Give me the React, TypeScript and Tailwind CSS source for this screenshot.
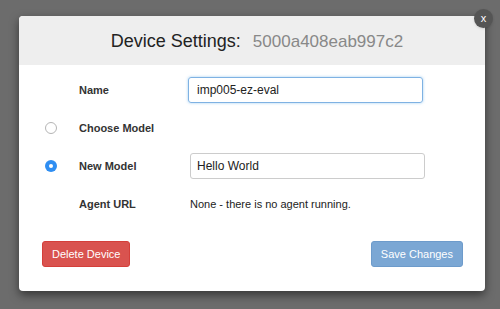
import { useState } from "react";

export default function App() {
  const [model, setModel] = useState("new");

  return (
    <div className="w-[500px] h-[309px] bg-[#6c6c6c] pt-[16px] pl-[19px] font-['Liberation_Sans',Arial,sans-serif]">
      <div className="relative w-[466px] h-[275px] bg-white rounded-[4px] shadow-[0_4px_10px_rgba(0,0,0,0.5)]">
        <button className="absolute -top-[7px] -right-[8px] w-[19px] h-[19px] rounded-full bg-[#555] text-white text-[11px] leading-none flex items-center justify-center shadow">
          x
        </button>

        <div className="h-[49px] bg-[#eeeeee] rounded-t-[4px] flex items-center justify-center gap-[12px] pt-[2px] pl-[10px]">
          <span className="text-[18px] text-[#222]">Device Settings:</span>
          <span className="text-[17px] text-[#888]">5000a408eab997c2</span>
        </div>

        <div className="pt-[12px]">
          <div className="flex items-center h-[26px]">
            <div className="w-[60px]" />
            <div className="w-[109px] text-[11px] font-bold text-[#333]">Name</div>
            <input
              defaultValue="imp005-ez-eval"
              className="w-[235px] h-[26px] px-[8px] text-[12px] text-[#222] border border-[#7fb2e3] rounded-[3px] shadow-[0_0_3px_rgba(102,175,233,0.6)] outline-none"
            />
          </div>

          <div className="flex items-center h-[26px] mt-[12px]">
            <div className="w-[60px] flex justify-center pl-[4px]">
              <Radio checked={model === "choose"} onClick={() => setModel("choose")} />
            </div>
            <div className="w-[109px] text-[11px] font-bold text-[#333]">Choose Model</div>
          </div>

          <div className="flex items-center h-[26px] mt-[12px]">
            <div className="w-[60px] flex justify-center pl-[4px]">
              <Radio checked={model === "new"} onClick={() => setModel("new")} />
            </div>
            <div className="w-[111px] text-[11px] font-bold text-[#333]">New Model</div>
            <input
              defaultValue="Hello World"
              className="w-[235px] h-[26px] px-[6px] text-[12px] text-[#222] border border-[#cccccc] rounded-[3px] outline-none"
            />
          </div>

          <div className="flex items-center h-[26px] mt-[12px]">
            <div className="w-[60px]" />
            <div className="w-[111px] text-[11px] font-bold text-[#333]">Agent URL</div>
            <div className="text-[11px] text-[#222]">None - there is no agent running.</div>
          </div>
        </div>

        <div className="flex justify-between pl-[23px] pr-[22px] mt-[24px]">
          <button className="h-[26px] px-[9px] rounded-[3px] bg-[#d9534f] border border-[#d43f3a] text-white text-[11px]">
            Delete Device
          </button>
          <button className="h-[26px] px-[9px] rounded-[3px] bg-[#7ba7d4] border border-[#6d9bcb] text-white text-[11px]">
            Save Changes
          </button>
        </div>
      </div>
    </div>
  );
}

function Radio({ checked, onClick }: { checked: boolean; onClick: () => void }) {
  return (
    <span
      onClick={onClick}
      className={
        checked
          ? "w-[12px] h-[12px] rounded-full bg-[#2f8ef2] flex items-center justify-center"
          : "w-[12px] h-[12px] rounded-full border border-[#b5b5b5] bg-white"
      }
    >
      {checked && <span className="w-[4px] h-[4px] rounded-full bg-white" />}
    </span>
  );
}
